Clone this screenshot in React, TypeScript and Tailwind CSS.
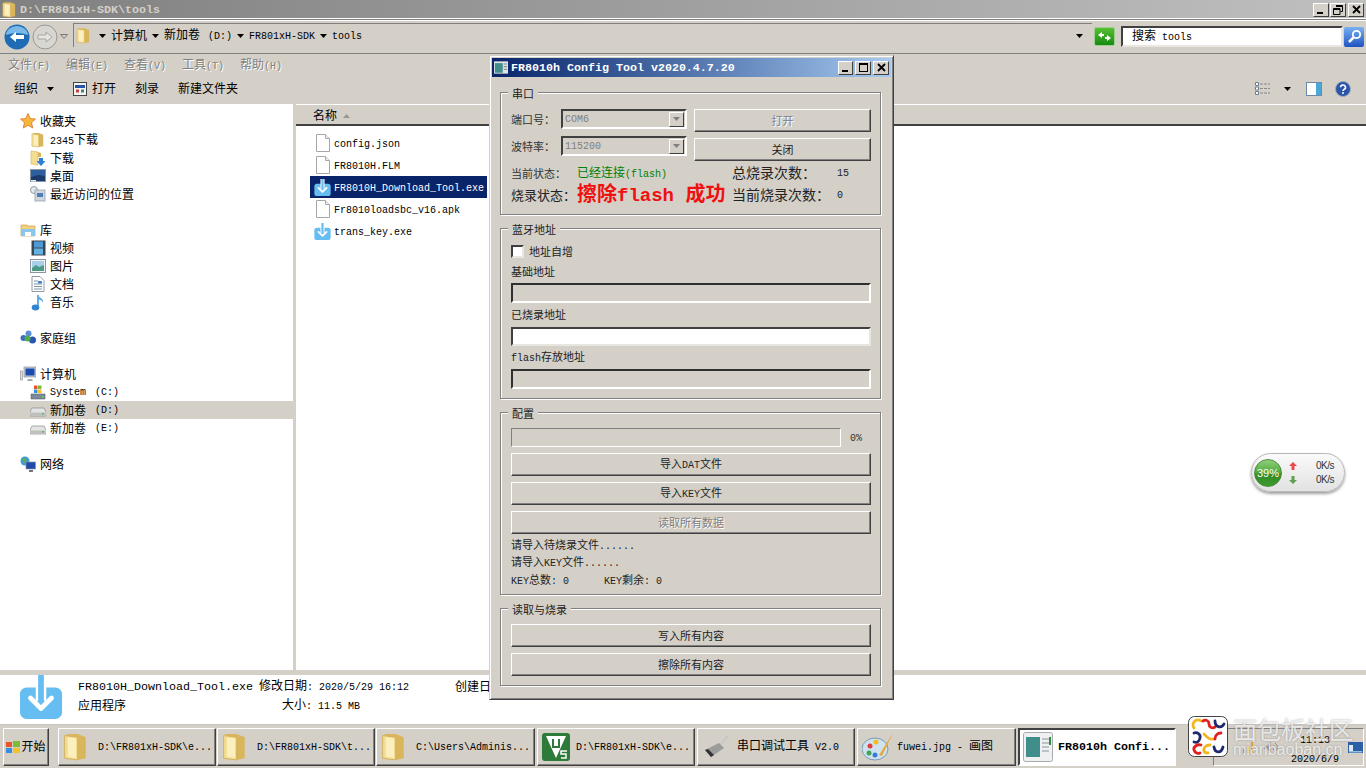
import React from 'react'

type Tone = 'xs' | 'sm' | 'mid' | 'md' | 'lg'

const cjkClass = {
  xs: "text-[11px] [font-family:'Noto_Sans_CJK_SC',sans-serif]",
  sm: "text-[12px] [font-family:'Noto_Sans_CJK_SC',sans-serif]",
  mid: "text-[13px] [font-family:'Noto_Sans_CJK_SC',sans-serif]",
  md: "text-[14px] [font-family:'Noto_Sans_CJK_SC',sans-serif]",
  lg: "text-[20px] font-bold [font-family:'Noto_Sans_CJK_SC',sans-serif]",
}
const latinClass = {
  xs: "text-[10px] [font-family:'Liberation_Mono',monospace]",
  sm: "text-[10px] [font-family:'Liberation_Mono',monospace]",
  mid: "text-[10px] [font-family:'Liberation_Mono',monospace]",
  md: "text-[10px] [font-family:'Liberation_Mono',monospace]",
  lg: "text-[19px] font-bold [font-family:'Liberation_Mono',monospace]",
}

// the old windows font has 12px hanzi with 6px latin, so split the runs
const T = ({ s, tone = 'sm' }: { s: string; tone?: Tone }) => (
  <span className="whitespace-pre">
    {s.split(/([\u3000-\u9fff\uff00-\uffef]+)/).map((part, i) =>
      part ? (
        <span key={i} className={i % 2 ? cjkClass[tone] : latinClass[tone]}>
          {part}
        </span>
      ) : null,
    )}
  </span>
)

const Folder = ({ size = 16 }: { size?: number }) => (
  <svg width={size} height={size * 1.15} viewBox="0 0 16 18" className="shrink-0">
    <path d="M2 1h7l5 2v13l-5 1z" fill="#d9b55c" />
    <path d="M1 2l8 1v14l-8-1z" fill="#f3dd93" stroke="#d2b25f" strokeWidth="0.6" />
    <path d="M3 3l5 .8v12L3 15z" fill="#fbefbd" />
  </svg>
)

const Page = () => (
  <svg width="16" height="18" viewBox="0 0 16 18" className="shrink-0">
    <path d="M1.500.5h9l4 4v13h-13z" fill="#fff" stroke="#a8a8a8" />
    <path d="M10.500.5v4h4" fill="#eee" stroke="#a8a8a8" />
  </svg>
)

const DownloadIcon = ({ size = 17 }: { size?: number }) => (
  <svg width={size} height={size} viewBox="0 0 44 46" className="shrink-0">
    <rect x="0" y="13" width="44" height="33" rx="7" fill="#66bdf2" />
    <path d="M22 0v27" stroke="#fff" strokeWidth="11" />
    <path d="M22 0v28" stroke="#66bdf2" strokeWidth="6" />
    <path d="M11 24l11 11 11-11" fill="none" stroke="#fff" strokeWidth="5" strokeLinecap="round" strokeLinejoin="round" />
  </svg>
)

const Star = () => (
  <svg width="16" height="16" viewBox="0 0 16 16" className="shrink-0">
    <path d="M8 .5l2.300 5 5.200.6-3.900 3.500 1.100 5.400L8 12.300 3.300 15l1.100-5.400L.5 6.100l5.200-.6z" fill="#f5b63a" stroke="#d8742a" strokeWidth="0.8" />
  </svg>
)

const LibIcon = () => (
  <svg width="16" height="16" viewBox="0 0 16 16" className="shrink-0">
    <path d="M1 3h6l1 1h7v10H1z" fill="#f1d27a" stroke="#c9a550" strokeWidth="0.7" />
    <path d="M1 7h14v7H1z" fill="#8cc6ea" />
    <rect x="5" y="10" width="6" height="4" fill="#fff" />
  </svg>
)

const Monitor = () => (
  <svg width="16" height="16" viewBox="0 0 16 16" className="shrink-0">
    <rect x="0.500" y="5" width="2" height="9" fill="#e0e0e0" stroke="#777" strokeWidth="0.5" />
    <rect x="4" y="1" width="12" height="10" fill="#c5ccd6" stroke="#7a8490" strokeWidth="0.6" />
    <rect x="5.500" y="2.500" width="9" height="7" fill="#1c4bb0" />
    <path d="M8 13h4l1 2H7z" fill="#a0a8b0" />
  </svg>
)

const HomeGroup = () => (
  <svg width="16" height="16" viewBox="0 0 16 16" className="shrink-0">
    <circle cx="3.500" cy="8" r="3" fill="#3a6fc4" />
    <circle cx="8.500" cy="3.500" r="3" fill="#5a8ed8" />
    <circle cx="12.500" cy="10" r="3.500" fill="#2c56ad" />
    <circle cx="7.500" cy="8.500" r="3" fill="#4fae4a" />
  </svg>
)

const Net = () => (
  <svg width="16" height="16" viewBox="0 0 16 16" className="shrink-0">
    <circle cx="5" cy="5" r="4.500" fill="#3f9ad6" />
    <path d="M2 3l3-1 2 2-3 3z" fill="#59b04d" />
    <rect x="6" y="6" width="9.500" height="7" fill="#1f4aa8" stroke="#8a94a2" strokeWidth="0.7" />
    <path d="M9 15h4" stroke="#6e7782" strokeWidth="2" />
  </svg>
)

const Drive = () => (
  <svg width="16" height="10" viewBox="0 0 16 10" className="mt-[3px] shrink-0">
    <path d="M2 1h12l2 4v4H0V5z" fill="#e4e4e4" stroke="#8b8b8b" strokeWidth="0.7" />
    <path d="M1 5.500h14v3H1z" fill="#c0c0c0" />
    <rect x="12" y="6" width="2" height="1.500" fill="#58c050" />
  </svg>
)

const SysDrive = () => (
  <svg width="16" height="16" viewBox="0 0 16 16" className="shrink-0">
    <path d="M1 10h14v5H1z" fill="#7d8a98" stroke="#5a6470" strokeWidth="0.6" />
    <rect x="12" y="12" width="2" height="1.500" fill="#62d04f" />
    <path d="M4 1.500h3.500v3.500H4z" fill="#e8552d" />
    <path d="M8 1.500h3.500v3.500H8z" fill="#7dbc3b" />
    <path d="M4 5.500h3.500V9H4z" fill="#3a8ddc" />
    <path d="M8 5.500h3.500V9H8z" fill="#f4c12e" />
  </svg>
)

const NavIcon = ({ kind }: { kind: string }) => {
  if (kind === 'dl')
    return (
      <svg width="16" height="17" viewBox="0 0 16 17" className="shrink-0">
        <path d="M1 1l7 1v13l-7-1z" fill="#f3dd93" stroke="#d2b25f" strokeWidth="0.6" />
        <path d="M8 2l3 1v4H8z" fill="#d9b55c" />
        <path d="M9 8h4v3h2.500L11 16l-4.500-5H9z" fill="#2d7fd6" />
      </svg>
    )
  if (kind === 'desk')
    return (
      <svg width="16" height="14" viewBox="0 0 16 14" className="shrink-0">
        <rect x="0.500" y="0.500" width="15" height="12" fill="#2d5f9c" stroke="#8796a6" />
        <path d="M1 8l7-2 7 1v5H1z" fill="#1c3a6b" />
        <path d="M1 11h5v1.500H1z" fill="#e8e8e8" />
      </svg>
    )
  if (kind === 'recent')
    return (
      <svg width="16" height="16" viewBox="0 0 16 16" className="shrink-0">
        <circle cx="4" cy="4" r="3.500" fill="#e4e8ec" stroke="#7b8792" strokeWidth="0.8" />
        <rect x="5" y="4" width="10" height="11" fill="#cfd6dd" stroke="#8996a2" strokeWidth="0.7" />
        <rect x="7" y="7" width="6" height="4" fill="#4d7eb8" />
      </svg>
    )
  if (kind === 'video')
    return (
      <svg width="15" height="16" viewBox="0 0 15 16" className="shrink-0">
        <rect x="0.500" y="0.500" width="14" height="15" fill="#3c4650" />
        <rect x="3" y="1.500" width="9" height="6" fill="#4e9ad6" />
        <rect x="3" y="8.500" width="9" height="6" fill="#63b0e4" />
      </svg>
    )
  if (kind === 'image')
    return (
      <svg width="16" height="14" viewBox="0 0 16 14" className="shrink-0">
        <rect x="0.500" y="0.500" width="15" height="13" fill="#f2f4f6" stroke="#8a96a2" />
        <rect x="2" y="2" width="12" height="10" fill="#a7cfe8" />
        <path d="M2 9l4-3 3 2 5-2v6H2z" fill="#4b9a86" />
      </svg>
    )
  if (kind === 'doc')
    return (
      <svg width="14" height="16" viewBox="0 0 14 16" className="shrink-0">
        <path d="M1 .5h8l4 4v11H1z" fill="#fff" stroke="#8f9aa5" />
        <path d="M3 5h4M3 8h8M3 10.500h8M3 13h8" stroke="#7e93a8" />
        <rect x="7" y="5" width="4" height="2.500" fill="#4a86c5" />
      </svg>
    )
  return (
    <svg width="14" height="17" viewBox="0 0 14 17" className="shrink-0">
      <path d="M7 1v12" stroke="#3a8fd6" strokeWidth="1.500" />
      <ellipse cx="4.500" cy="13.500" rx="3.800" ry="3" fill="#2f85d0" />
      <path d="M7 1c1 3 6 3 5 8-1-3-3-3-5-4z" fill="#5eaee6" />
    </svg>
  )
}

const TreeRow = ({ icon, text, drive, sub, active }: { icon: React.ReactNode; text: string; drive?: string; sub?: boolean; active?: boolean }) => (
  <div className={active ? 'flex h-[18px] items-center gap-[4px] bg-[#d4d0c8] pl-[30px] text-black' : sub ? 'flex h-[18px] items-center gap-[4px] pl-[30px] text-black' : 'flex h-[18px] items-center gap-[4px] pl-[20px] text-black'}>
    <span className="flex w-[16px] shrink-0 justify-center">{icon}</span>
    <T s={text} />
    {drive && <span className="ml-[5px]"><T s={drive} /></span>}
  </div>
)

const FileRow = ({ icon, text, selected }: { icon: React.ReactNode; text: string; selected?: boolean }) => (
  <div className={selected ? 'flex h-[22px] items-center gap-[3px] bg-[#0a246a] pl-[4px] text-white' : 'flex h-[22px] items-center gap-[3px] pl-[4px] text-black'}>
    <span className="flex w-[17px] shrink-0 justify-center">{icon}</span>
    <span className="pt-[2px]"><T s={text} /></span>
  </div>
)

const MinGlyph = () => <span className="mt-[7px] mr-[2px] block h-[2px] w-[6px] bg-black" />
const MaxGlyph = () => <span className="block h-[9px] w-[9px] border border-t-2 border-black" />
const RestoreGlyph = () => (
  <svg width="10" height="10" viewBox="0 0 10 10">
    <path d="M3 .5h6.500v6H7.500M.5 3.500h6.500v6H.5zM3 1.500h6.500M.5 4.500H7" fill="none" stroke="#000" />
  </svg>
)
const CloseGlyph = () => (
  <svg width="9" height="9" viewBox="0 0 9 9">
    <path d="M1 1l7 7M8 1l-7 7" stroke="#000" strokeWidth="1.800" />
  </svg>
)

const WinBtn = ({ children, w = 'w-[16px]' }: { children: React.ReactNode; w?: string }) => (
  <div className={`flex h-[14px] ${w} items-center justify-center border border-t-white border-l-white border-r-[#404040] border-b-[#404040] bg-[#d4d0c8]`}>{children}</div>
)

const Btn = ({ text, disabled, cls = 'w-[360px]' }: { text: string; disabled?: boolean; cls?: string }) => (
  <div className={`flex h-[23px] ${cls} shrink-0 items-center justify-center border border-t-white border-l-white border-r-[#404040] border-b-[#404040] bg-[#d4d0c8] shadow-[inset_-1px_-1px_0_#808080] ${disabled ? 'text-[#808080] [text-shadow:1px_1px_0_#fff]' : 'text-[#222]'}`}>
    <T s={text} tone="xs" />
  </div>
)

const Combo = ({ value }: { value: string }) => (
  <div className="flex h-[20px] w-[126px] items-center justify-between border-2 border-t-[#404040] border-l-[#404040] border-r-white border-b-white bg-[#d4d0c8] pr-[1px] pl-[2px] text-[#808080]">
    <T s={value} />
    <div className="flex h-[15px] w-[15px] items-center justify-center border border-t-white border-l-white border-r-[#404040] border-b-[#404040]">
      <svg width="7" height="4" viewBox="0 0 7 4"><path d="M0 0h7L3.500 4z" fill="#808080" /></svg>
    </div>
  </div>
)

const Field = ({ white }: { white?: boolean }) => (
  <div className={white ? 'h-[19px] w-[360px] border-2 border-t-[#404040] border-l-[#404040] border-r-[#e8e6e0] border-b-[#e8e6e0] bg-white' : 'h-[20px] w-[360px] border-2 border-t-[#303030] border-l-[#303030] border-r-white border-b-white bg-[#d4d0c8]'} />
)

const Group = ({ title, cls, children }: { title: string; cls: string; children: React.ReactNode }) => (
  <div className={`relative flex w-[381px] shrink-0 flex-col border border-[#808080] pl-[10px] text-[#222] shadow-[1px_1px_0_#fff,inset_1px_1px_0_#fff] ${cls}`}>
    <div className="absolute top-[-7px] left-[7px] flex h-[14px] items-center bg-[#d4d0c8] px-[4px]">
      <T s={title} tone="xs" />
    </div>
    {children}
  </div>
)

const TaskBtn = ({ icon, text, cls = 'w-[158px]' }: { icon: React.ReactNode; text: React.ReactNode; cls?: string }) => (
  <div className={`flex h-[38px] ${cls} shrink-0 items-center overflow-hidden border border-t-white border-l-white border-r-[#404040] border-b-[#404040] bg-[#d4d0c8] pl-[4px] text-black shadow-[inset_-1px_-1px_0_#808080]`}>
    {icon}
    {text}
  </div>
)

const Caret = () => (
  <svg width="7" height="4" viewBox="0 0 7 4" className="shrink-0"><path d="M0 0h7L3.500 4z" fill="#000" /></svg>
)

const WatermarkLogo = () => (
  <svg width="40" height="41" viewBox="0 0 40 41">
    <rect x="0.500" y="0.500" width="39" height="40" rx="6" fill="#fff" stroke="#444" />
    <g fill="none" strokeWidth="2.800" strokeLinecap="round">
      <path d="M13 5a5 5 0 0 0-7 7" stroke="#f2b51d" />
      <path d="M15 5c3-2 6 0 6 3s3 5 6 3" stroke="#e0201c" />
      <path d="M27 5c0 6 6 8 9 3" stroke="#1d2a6e" />
      <path d="M6 17c3-1 7 1 6 5s-3 5-6 4" stroke="#1d2a6e" />
      <path d="M16 18c3 3 5 6 10 5" stroke="#f2b51d" />
      <path d="M33 17c-4 0-6 3-6 6" stroke="#e0201c" />
      <path d="M13 29c-4-1-8 2-7 5s4 4 6 3" stroke="#e0201c" />
      <path d="M22 29c-4 0-7 3-6 6 .5 1.500 2 2 4 2" stroke="#f2b51d" />
      <path d="M26 31c1 6 7 7 9 0" stroke="#1d2a6e" />
    </g>
  </svg>
)

const ConfigWindow = () => (
  <div className="absolute top-[55px] left-[489px] z-10 flex h-[645px] w-[405px] flex-col border border-t-[#d4d0c8] border-l-[#d4d0c8] border-r-[#404040] border-b-[#404040] bg-[#d4d0c8] shadow-[inset_1px_1px_0_#fff,inset_-1px_-1px_0_#808080]">
    <div className="mx-[2px] mt-[2px] flex h-[19px] shrink-0 items-center bg-gradient-to-r from-[#0a246a] to-[#a6caf0] pr-[2px] pl-[2px]">
      <svg width="14" height="13" viewBox="0 0 16 14" className="shrink-0">
        <rect width="16" height="14" fill="#e4e4e4" />
        <rect x="1" y="2" width="9" height="11" fill="#3f8e8c" />
        <path d="M11 3h4M11 6h4M11 9h4" stroke="#607080" />
      </svg>
      <span className="ml-[3px] whitespace-pre pt-[1px] text-[11.67px] font-bold text-white [font-family:'Liberation_Mono',monospace]">FR8010h Config Tool v2020.4.7.20</span>
      <div className="ml-auto flex items-center gap-[2px]">
        <WinBtn w="w-[15px]"><MinGlyph /></WinBtn>
        <WinBtn w="w-[16px]"><MaxGlyph /></WinBtn>
        <WinBtn w="w-[16px]"><CloseGlyph /></WinBtn>
      </div>
    </div>

    <div className="mt-[15px] ml-[10px] flex flex-col gap-[13px]">
      <Group title="串口" cls="h-[123px] pt-[16px]">
        <div className="flex h-[27px] items-start">
          <div className="flex h-[20px] w-[50px] items-center text-[#333]"><T s="端口号：" tone="xs" /></div>
          <Combo value="COM6" />
          <div className="ml-[7px]"><Btn text="打开" disabled cls="w-[177px]" /></div>
        </div>
        <div className="flex h-[28px] items-start">
          <div className="flex h-[20px] w-[50px] items-center text-[#333]"><T s="波特率：" tone="xs" /></div>
          <Combo value="115200" />
          <div className="mt-[2px] ml-[7px]"><Btn text="关闭" cls="w-[177px]" /></div>
        </div>
        <div className="flex h-[18px] items-center">
          <div className="w-[66px] text-[#333]"><T s="当前状态：" tone="xs" /></div>
          <div className="w-[155px] text-[#008000]"><T s="已经连接(flash)" /></div>
          <div className="w-[105px] text-[#222]"><T s="总烧录次数：" tone="md" /></div>
          <T s="15" />
        </div>
        <div className="mt-[2px] flex h-[22px] items-center">
          <div className="w-[66px]"><T s="烧录状态：" tone="mid" /></div>
          <div className="w-[155px] text-[#f01010]"><T s="擦除flash 成功" tone="lg" /></div>
          <div className="w-[105px]"><T s="当前烧录次数：" tone="md" /></div>
          <T s="0" />
        </div>
      </Group>

      <Group title="蓝牙地址" cls="h-[171px] pt-[13px]">
        <div className="flex h-[18px] items-center">
          <div className="h-[13px] w-[13px] border-2 border-t-[#404040] border-l-[#404040] border-r-[#e8e6e0] border-b-[#e8e6e0] bg-white" />
          <div className="ml-[5px]"><T s="地址自增" tone="xs" /></div>
        </div>
        <div className="mt-[2px] flex h-[18px] items-center"><T s="基础地址" tone="xs" /></div>
        <div className="mt-[3px]"><Field /></div>
        <div className="mt-[2px] flex h-[18px] items-center"><T s="已烧录地址" tone="xs" /></div>
        <div className="mt-[4px]"><Field white /></div>
        <div className="mt-[2px] flex h-[18px] items-center"><T s="flash存放地址" tone="xs" /></div>
        <div className="mt-[3px]"><Field /></div>
      </Group>

      <Group title="配置" cls="h-[183px] pt-[15px]">
        <div className="flex items-center">
          <div className="h-[19px] w-[330px] border border-t-[#808080] border-l-[#808080] border-r-white border-b-white" />
          <div className="ml-[9px] text-[#333]"><T s="0%" /></div>
        </div>
        <div className="mt-[6px]"><Btn text="导入DAT文件" /></div>
        <div className="mt-[6px]"><Btn text="导入KEY文件" /></div>
        <div className="mt-[6px]"><Btn text="读取所有数据" disabled /></div>
        <div className="mt-[2px] flex h-[18px] items-center"><T s="请导入待烧录文件......" tone="xs" /></div>
        <div className="flex h-[17px] items-center"><T s="请导入KEY文件......" tone="xs" /></div>
        <div className="flex h-[18px] items-center">
          <div className="w-[93px]"><T s="KEY总数: 0" tone="xs" /></div>
          <T s="KEY剩余: 0" tone="xs" />
        </div>
      </Group>

      <Group title="读取与烧录" cls="h-[78px] pt-[15px]">
        <Btn text="写入所有内容" />
        <div className="mt-[6px]"><Btn text="擦除所有内容" /></div>
      </Group>
    </div>
  </div>
)

export default function App() {
  return (
    <div className="relative flex h-[768px] w-[1366px] flex-col overflow-hidden bg-white text-[12px] leading-[12px] text-black">
      {/* explorer title bar */}
      <div className="flex h-[19px] shrink-0 items-center bg-gradient-to-r from-[#808080] to-[#c0c0c0] pr-[2px] pl-[2px]">
        <Folder size={15} />
        <span className="ml-[3px] whitespace-pre text-[11.67px] font-bold text-[#d4d0c8] [font-family:'Liberation_Mono',monospace]">D:\FR801xH-SDK\tools</span>
        <div className="ml-auto flex items-center gap-[1px]">
          <WinBtn><MinGlyph /></WinBtn>
          <WinBtn><RestoreGlyph /></WinBtn>
          <div className="ml-[1px]"><WinBtn><CloseGlyph /></WinBtn></div>
        </div>
      </div>

      {/* nav bar */}
      <div className="flex h-[35px] shrink-0 items-center border-y border-[#808080] bg-[#d4d0c8] pl-[4px] shadow-[inset_0_1px_0_#fff,0_-1px_0_#fff]">
        <svg width="26" height="26" viewBox="0 0 26 26" className="shrink-0">
          <circle cx="13" cy="13" r="12.500" fill="#1f6cb4" />
          <path d="M2 11a11 9 0 0 1 22 0 22 14 0 0 0-22 0z" fill="#7ab8e8" />
          <path d="M6 13l6-5v3h8v4h-8v3z" fill="#fff" />
        </svg>
        <svg width="26" height="26" viewBox="0 0 26 26" className="ml-[2px] shrink-0">
          <circle cx="13" cy="13" r="12" fill="#d8d6d0" stroke="#9a9890" />
          <path d="M20 13l-6-5v3H6v4h8v3z" fill="#e8e6e2" stroke="#a8a6a0" />
        </svg>
        <svg width="8" height="5" viewBox="0 0 8 5" className="ml-[2px] shrink-0"><path d="M.5.500h7L4 4.500z" fill="none" stroke="#777" /></svg>
        <div className="ml-[5px] mb-[3px] flex h-[24px] w-[1019px] shrink-0 items-center border-t border-l border-[#808080] border-r-white bg-[#d4d0c8] pl-[2px]">
          <Folder size={15} />
          <div className="ml-[8px] flex items-center gap-[5px]">
            <Caret /><T s="计算机" /><Caret />
            <span><T s="新加卷" /><span className="ml-[8px]"><T s="(D:)" /></span></span>
            <Caret /><T s="FR801xH-SDK" /><Caret /><T s="tools" />
          </div>
          <div className="mr-[9px] ml-auto"><Caret /></div>
        </div>
        <div className="ml-[2px] flex h-[19px] w-[21px] shrink-0 items-center justify-center rounded-[2px] border border-[#9ad08a] bg-gradient-to-b from-[#55c032] to-[#148a14]">
          <svg width="15" height="11" viewBox="0 0 15 11"><path d="M1 4l4-3v2h2v2H5v2zM14 7l-4 3V8H8V6h2V4z" fill="#fff" /></svg>
        </div>
        <div className="ml-[6px] flex h-[21px] w-[222px] shrink-0 items-center border-2 border-t-[#404040] border-l-[#404040] border-r-[#e8e6e0] border-b-[#e8e6e0] bg-white pl-[9px]">
          <T s="搜索 tools" />
        </div>
        <div className="ml-[1px] flex h-[20px] w-[20px] shrink-0 items-center justify-center rounded-[2px] bg-gradient-to-b from-[#7ab0f0] to-[#1f52c0]">
          <svg width="15" height="15" viewBox="0 0 15 15"><circle cx="9.500" cy="5.500" r="3.700" fill="none" stroke="#fff" strokeWidth="1.800" /><path d="M6.500 8.500L2 13" stroke="#fff" strokeWidth="2.500" /></svg>
        </div>
      </div>

      {/* menu + toolbar */}
      <div className="flex h-[50px] shrink-0 flex-col bg-[#d4d0c8]">
        <div className="flex h-[18px] items-center pt-[4px] pl-[8px] text-[#808080] [text-shadow:1px_1px_0_#fff]">
          <div className="w-[58px]"><T s="文件(F)" /></div>
          <div className="w-[58px]"><T s="编辑(E)" /></div>
          <div className="w-[58px]"><T s="查看(V)" /></div>
          <div className="w-[58px]"><T s="工具(T)" /></div>
          <T s="帮助(H)" />
        </div>
        <div className="flex h-[31px] items-center pt-[2px] pl-[14px] text-black">
          <T s="组织" />
          <div className="ml-[9px]"><Caret /></div>
          <svg width="15" height="16" viewBox="0 0 15 16" className="ml-[19px] shrink-0">
            <rect x="0.500" y="1.500" width="13" height="13" fill="#f4f4f4" stroke="#444" />
            <rect x="2" y="4" width="10" height="3" fill="#2855a8" />
            <rect x="3" y="8.500" width="3" height="3" fill="#c84040" />
            <rect x="8" y="8.500" width="3" height="3" fill="#3a8a60" />
          </svg>
          <div className="ml-[4px]"><T s="打开" /></div>
          <div className="ml-[19px]"><T s="刻录" /></div>
          <div className="ml-[19px]"><T s="新建文件夹" /></div>
          <div className="ml-auto flex items-center pr-[15px]">
            <svg width="15" height="13" viewBox="0 0 15 13" className="shrink-0">
              <path d="M.5.500h3v3h-3zM.5 5h3v3h-3zM.5 9.500h3v3h-3z" fill="#fff" stroke="#6a7d90" />
              <path d="M5 2h10M5 6.500h10M5 11h10" stroke="#888" strokeDasharray="3 1" />
            </svg>
            <div className="ml-[14px]"><Caret /></div>
            <svg width="16" height="14" viewBox="0 0 16 14" className="ml-[15px] shrink-0">
              <rect x="0.500" y="0.500" width="15" height="13" fill="#fff" stroke="#6a8aa8" />
              <rect x="10" y="1" width="5" height="12" fill="#4aa8d8" />
            </svg>
            <svg width="16" height="16" viewBox="0 0 16 16" className="ml-[13px] shrink-0">
              <circle cx="8" cy="8" r="7.500" fill="#2b56a8" stroke="#9aa8c0" />
              <path d="M5.500 6.200a2.500 2.300 0 1 1 3.500 2.200c-.8.400-1 .8-1 1.600" fill="none" stroke="#fff" strokeWidth="1.600" />
              <circle cx="8" cy="12" r="1" fill="#fff" />
            </svg>
          </div>
        </div>
      </div>

      {/* main: tree + file list */}
      <div className="flex h-[566px] shrink-0">
        <div className="flex w-[293px] shrink-0 flex-col pt-[8px]">
          <TreeRow icon={<Star />} text="收藏夹" />
          <div className="h-[1px]" />
          <TreeRow sub icon={<Folder size={14} />} text="2345下载" />
          <TreeRow sub icon={<NavIcon kind="dl" />} text="下载" />
          <TreeRow sub icon={<NavIcon kind="desk" />} text="桌面" />
          <TreeRow sub icon={<NavIcon kind="recent" />} text="最近访问的位置" />
          <div className="h-[18px]" />
          <TreeRow icon={<LibIcon />} text="库" />
          <TreeRow sub icon={<NavIcon kind="video" />} text="视频" />
          <TreeRow sub icon={<NavIcon kind="image" />} text="图片" />
          <TreeRow sub icon={<NavIcon kind="doc" />} text="文档" />
          <TreeRow sub icon={<NavIcon kind="music" />} text="音乐" />
          <div className="h-[18px]" />
          <TreeRow icon={<HomeGroup />} text="家庭组" />
          <div className="h-[18px]" />
          <TreeRow icon={<Monitor />} text="计算机" />
          <TreeRow sub icon={<SysDrive />} text="System" drive="(C:)" />
          <TreeRow sub active icon={<Drive />} text="新加卷" drive="(D:)" />
          <TreeRow sub icon={<Drive />} text="新加卷" drive="(E:)" />
          <div className="h-[18px]" />
          <TreeRow icon={<Net />} text="网络" />
        </div>
        <div className="w-[3px] shrink-0 bg-[#d4d0c8]" />
        <div className="flex min-w-0 flex-1 flex-col">
          <div className="flex h-[22px] shrink-0 items-center border-t border-b-2 border-t-white border-b-[#404040] bg-[#d4d0c8] pt-[2px] pl-[17px]">
            <T s="名称" />
            <svg width="7" height="4" viewBox="0 0 7 4" className="ml-[6px]"><path d="M0 4h7L3.500 0z" fill="#9a9890" /></svg>
          </div>
          <div className="ml-[14px] flex w-[177px] flex-col pt-[6px]">
            <FileRow icon={<Page />} text="config.json" />
            <FileRow icon={<Page />} text="FR8010H.FLM" />
            <FileRow selected icon={<DownloadIcon />} text="FR8010H_Download_Tool.exe" />
            <FileRow icon={<Page />} text="Fr8010loadsbc_v16.apk" />
            <FileRow icon={<DownloadIcon />} text="trans_key.exe" />
          </div>
        </div>
      </div>

      {/* details pane */}
      <div className="h-[5px] shrink-0 bg-[#d4d0c8]" />
      <div className="flex h-[50px] shrink-0 border-b border-[#c8c6be] pl-[19px]">
        <DownloadIcon size={44} />
        <div className="ml-[15px] flex flex-col pt-[2px]">
          <div className="flex h-[19px] items-center">
            <span className="whitespace-pre text-[11.67px] [font-family:'Liberation_Mono',monospace]">FR8010H_Download_Tool.exe</span>
            <span className="ml-[6px]"><T s="修改日期: 2020/5/29 16:12" /></span>
            <div className="ml-[46px]"><T s="创建日期" /></div>
          </div>
          <div className="flex h-[19px] items-center">
            <div className="w-[204px]"><T s="应用程序" /></div>
            <T s="大小: 11.5 MB" />
          </div>
        </div>
      </div>

      {/* taskbar */}
      <div className="flex min-h-0 flex-1 items-center gap-[1px] bg-[#d4d0c8] pl-[3px]">
        <div className="mr-[8px] flex h-[38px] w-[46px] shrink-0 items-center justify-center gap-[1px] border border-t-white border-l-white border-r-[#404040] border-b-[#404040] shadow-[inset_-1px_-1px_0_#808080]">
          <svg width="14" height="14" viewBox="0 0 14 14" className="shrink-0">
            <path d="M0 2h6v5H0z" fill="#e8552d" /><path d="M7 1h7v6H7z" fill="#7dbc3b" /><path d="M0 8h6v5H0z" fill="#3a8ddc" /><path d="M7 8h7v5H7z" fill="#f4c12e" />
          </svg>
          <T s="开始" />
        </div>
        <TaskBtn icon={<Folder size={26} />} text={<div className="ml-[9px]"><T s="D:\FR801xH-SDK\e..." /></div>} />
        <TaskBtn icon={<Folder size={26} />} text={<div className="ml-[9px]"><T s="D:\FR801xH-SDK\t..." /></div>} />
        <TaskBtn cls="w-[159px]" icon={<Folder size={26} />} text={<div className="ml-[9px]"><T s="C:\Users\Adminis..." /></div>} />
        <div className="w-[0px] shrink-0" />
        <TaskBtn
          icon={
            <svg width="28" height="28" viewBox="0 0 28 28" className="shrink-0">
              <rect width="28" height="28" rx="3" fill="#2e7a3a" />
              <path d="M4 3h20L14 25z" fill="#fff" />
              <path d="M11 6v8M17 6v8M10 14h8" stroke="#2e7a3a" strokeWidth="2" />
              <path d="M25 18h-6v3h5v4h-5" fill="none" stroke="#fff" strokeWidth="1.500" />
            </svg>
          }
          text={<div className="ml-[6px]"><T s="D:\FR801xH-SDK\e..." /></div>}
        />
        <div className="w-[0px] shrink-0" />
        <TaskBtn
          icon={
            <svg width="28" height="24" viewBox="0 0 28 24" className="ml-[1px] shrink-0">
              <path d="M2 15l14-7 5 5-13 9z" fill="#9c9c9c" />
              <path d="M2 15l6 7 3-2-6-6z" fill="#333" />
              <path d="M18 9l7-8" stroke="#c8c8c8" strokeWidth="2.500" />
            </svg>
          }
          text={<div className="ml-[6px]"><T s="串口调试工具 V2.0" /></div>}
        />
        <div className="w-[0px] shrink-0" />
        <TaskBtn
          cls="w-[159px]"
          icon={
            <svg width="32" height="30" viewBox="0 0 32 30" className="shrink-0">
              <ellipse cx="13" cy="17" rx="13" ry="11" fill="#cfe2ef" stroke="#7a9ab0" />
              <circle cx="8" cy="14" r="2.500" fill="#e23c3c" /><circle cx="14" cy="10" r="2.500" fill="#f2c025" /><circle cx="7" cy="21" r="2.500" fill="#3ea650" /><circle cx="13" cy="23" r="2.500" fill="#3a7ad6" />
              <path d="M31 1L20 24l-3-1z" fill="#e8a83a" />
            </svg>
          }
          text={<div className="ml-[3px]"><T s="fuwei.jpg - 画图" /></div>}
        />
        <div className="ml-[1px] flex h-[38px] w-[158px] shrink-0 items-center border-2 border-t-[#404040] border-l-[#404040] border-r-white border-b-white bg-white pl-[3px]">
          <svg width="30" height="30" viewBox="0 0 30 30" className="shrink-0">
            <rect x="0.500" y="0.500" width="29" height="29" rx="2" fill="#eef0f2" stroke="#a8acb0" />
            <rect x="3" y="5" width="14" height="20" fill="#3f8e8c" />
            <path d="M19 7h7M19 11h7M19 15h7M19 19h7" stroke="#8a949c" />
            <path d="M27 5v8" stroke="#2c8a3a" strokeWidth="2" />
          </svg>
          <span className="ml-[5px] whitespace-pre text-[11.67px] font-bold text-black [font-family:'Liberation_Mono',monospace]">FR8010h Confi...</span>
        </div>
        {/* tray */}
        <div className="mr-[2px] ml-auto flex h-[38px] w-[151px] shrink-0 items-start border border-t-[#808080] border-l-[#808080] border-r-white border-b-white pl-[29px] text-black">
          <svg width="10" height="11" viewBox="0 0 10 11" className="mt-[13px] shrink-0">
            <path d="M0 7h2v4H0z" fill="#8a8a8a" /><path d="M4 4h2v7H4z" fill="#e8a030" /><path d="M8 0h2v11H8z" fill="#e8a030" />
          </svg>
          <svg width="14" height="11" viewBox="0 0 14 11" className="mt-[13px] ml-[11px] shrink-0">
            <path d="M0 4h3l4-4v11L3 7H0z" fill="#9a9a9a" /><path d="M9 3c1.500 1.500 1.500 3.500 0 5M11 1c3 3 3 6 0 9" fill="none" stroke="#8a8a8a" />
          </svg>
          <div className="mt-[4px] ml-[13px] flex w-[48px] shrink-0 flex-col items-center">
            <T s="11:13" />
            <div className="mt-[5px]"><T s="2020/6/9" /></div>
          </div>
          <svg width="15" height="11" viewBox="0 0 15 11" className="mt-[13px] ml-[9px] shrink-0">
            <rect width="15" height="11" fill="#2a5fa8" /><rect x="1" y="9" width="13" height="1.500" fill="#9ac0e0" /><rect x="1" y="3" width="4" height="6" fill="#dce8f4" />
          </svg>
        </div>
      </div>

      <ConfigWindow />

      {/* speed widget */}
      <div className="absolute top-[453px] left-[1251px] flex h-[39px] w-[94px] items-center rounded-full border border-[#b8b8b8] bg-gradient-to-b from-[#fafafa] to-[#e2e2e2] pl-[2px] shadow-[0_2px_3px_#a0a0a0]">
        <div className="flex h-[28px] w-[28px] shrink-0 items-center justify-center rounded-full border border-[#4c8a3c] bg-[linear-gradient(#8fd07a,#4fa83c_50%,#2e8a22_55%,#3f9c30)] text-[11px] text-white [font-family:'Liberation_Sans',sans-serif]">39%</div>
        <div className="ml-[7px] flex flex-col gap-[6px]">
          <svg width="8" height="8" viewBox="0 0 8 8"><path d="M4 0l4 4H5.500v4h-3V4H0z" fill="#e84a4a" /></svg>
          <svg width="8" height="8" viewBox="0 0 8 8"><path d="M4 8l4-4H5.500V0h-3v4H0z" fill="#5fa050" /></svg>
        </div>
        <div className="ml-[19px] flex flex-col gap-[2px] text-[10px] leading-[12px] tracking-[-0.5px] text-[#333] [font-family:'Liberation_Sans',sans-serif]">
          <span>0K/s</span>
          <span>0K/s</span>
        </div>
      </div>

      {/* site watermark */}
      <div className="absolute top-[716px] left-[1188px] z-20 flex items-start">
        <WatermarkLogo />
        <div className="ml-[5px] flex flex-col items-start pt-[0px] text-white/75 [text-shadow:0_0_2px_rgba(120,120,120,0.7)]">
          <span className="text-[24px] leading-[26px] [font-family:'Noto_Sans_CJK_SC',sans-serif]">面包板社区</span>
          <span className="text-[16px] leading-[16px] [font-family:'Liberation_Sans',sans-serif]">mianbaoban.cn</span>
        </div>
      </div>
    </div>
  )
}
